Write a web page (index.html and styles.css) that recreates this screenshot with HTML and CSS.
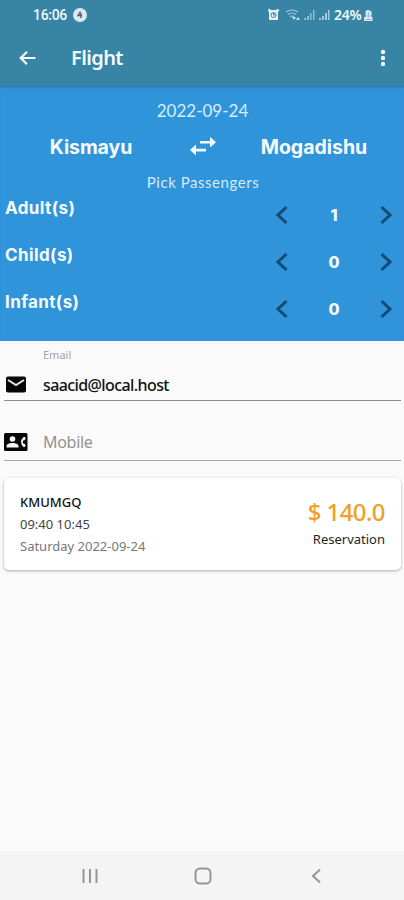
FILE: index.html
```html
<!DOCTYPE html>
<html lang="en">
<head>
<meta charset="utf-8">
<meta name="viewport" content="width=device-width, initial-scale=1">
<title>Flight</title>
<link rel="stylesheet" href="styles.css">
</head>
<body>
<div class="screen">
  <header class="top">
    <div class="status">
      <span class="clock">16:06</span>
      <svg class="notice" width="14" height="14" viewBox="0 0 14 14"><circle cx="7" cy="7" r="7" fill="#d9eaf3"/><path d="M7.500 3.500 5 7.500h4M8 5v5" fill="none" stroke="#5b5a6c" stroke-width="1.400"/></svg>
      <svg class="indicators" width="62" height="14" viewBox="0 0 62 14">
        <path d="M1 2h9v10H1z" fill="#e6f3f8"/><path d="M0 3l2-2M11 3 9 1" stroke="#e6f3f8" stroke-width="1.5"/><circle cx="5.500" cy="7" r="2.500" fill="none" stroke="#3784a3"/><path d="M5.500 5v2h2" fill="none" stroke="#3784a3"/>
        <g fill="none" stroke="#a3cbdc" stroke-width="1.100"><path d="M18 4q6-4 12 0M20 6.500q4-3 8 0M22 9q2-2 4 0"/></g>
        <path d="M24 9l2 3 2-3zM28 12l2-3 2 3z" fill="#cce3ec"/>
        <path d="M36 12h2v-2h-2zM39 12h2V8h-2zM42 12h1.500V5H42zM45 12h1.500V2H45z" fill="#8fbfd2"/>
        <path d="M51 12h2v-2h-2zM54 12h2V8h-2zM57 12h2V5h-2zM60 12h1.500V2H60z" fill="#9fcada"/>
      </svg>
      <span class="percent">24%</span>
      <svg class="battery" width="9" height="13" viewBox="0 0 9 13"><path d="M2.500 1h3v1h2v6h1v4H0V8h1.500V2h1z" fill="#d5e8f0"/><path d="M4.500 3v5M2.500 6l2 2 2-2M1.500 10.500h5.500" fill="none" stroke="#8dbacd"/></svg>
    </div>
    <div class="appbar">
      <svg class="back" width="18" height="16" viewBox="0 0 18 16"><path d="M16.500 8H2M8 1.700 1.700 8l6.300 6.300" fill="none" stroke="#f2fafd" stroke-width="2.200"/></svg>
      <h1 class="title">Flight</h1>
      <svg class="more" width="6" height="18" viewBox="0 0 6 18" fill="#f2fafd"><circle cx="3" cy="3" r="2.200"/><circle cx="3" cy="9" r="2.200"/><circle cx="3" cy="15" r="2.200"/></svg>
    </div>
  </header>

  <section class="trip">
    <div class="date"><span>2022-09-24</span></div>
    <div class="route">
      <span class="city from">Kismayu</span>
      <svg class="swap" width="26" height="20" viewBox="0 0 26 20"><path d="M10 5h10V.800L26 6.200l-6 5.400V7.600H10zM16 15.400H6v4L0 14l6-5.400v4.200h10z" fill="#f4fbff"/></svg>
      <span class="city to">Mogadishu</span>
    </div>
    <div class="pick"><span>Pick Passengers</span></div>
    <div class="row"><span class="kind adult">Adult(s)</span><div class="stepper"><svg class="chev" viewBox="0 0 12 20"><path d="M10.500 2 2 10l8.500 8"/></svg><span class="count">1</span><svg class="chev" viewBox="0 0 12 20"><path d="M1.500 2 10 10l-8.500 8"/></svg></div></div>
    <div class="row"><span class="kind child">Child(s)</span><div class="stepper"><svg class="chev" viewBox="0 0 12 20"><path d="M10.500 2 2 10l8.500 8"/></svg><span class="count">0</span><svg class="chev" viewBox="0 0 12 20"><path d="M1.500 2 10 10l-8.500 8"/></svg></div></div>
    <div class="row"><span class="kind infant">Infant(s)</span><div class="stepper"><svg class="chev" viewBox="0 0 12 20"><path d="M10.500 2 2 10l8.500 8"/></svg><span class="count">0</span><svg class="chev" viewBox="0 0 12 20"><path d="M1.500 2 10 10l-8.500 8"/></svg></div></div>
  </section>

  <main class="content">
    <div class="label">Email</div>
    <div class="field email">
      <svg width="24" height="18" viewBox="0 0 24 18"><rect x="2" y="0.500" width="20" height="16" rx="2" fill="#050505"/><path d="M4 4l8 5 8-5" fill="none" stroke="#e8e8e8" stroke-width="2"/></svg>
      <span class="value">saacid@local.host</span>
    </div>
    <div class="field mobile">
      <svg width="24" height="18" viewBox="0 0 24 18"><rect x="0" y="0" width="23.500" height="18" rx="1.500" fill="#050505"/><circle cx="8.500" cy="6" r="2.800" fill="#f5f5f5"/><path d="M2.500 14.500v-1.500c0-4 12-4 12 0v1.500z" fill="#f5f5f5"/><path d="M21 4h-1.500q-5 5 0 10H21l.7-1.800-1.500-1.800h-1.100q-.5-1.400 0-2.800h1.100L21.700 5.800z" fill="#f5f5f5"/></svg>
      <span class="placeholder">Mobile</span>
    </div>
    <article class="card">
      <div class="flight">
        <div class="code"><span>KMUMGQ</span></div>
        <div class="times"><span>09:40 10:45</span></div>
        <div class="day"><span>Saturday 2022-09-24</span></div>
      </div>
      <div class="fare">
        <div class="price"><span>$ 140.0</span></div>
        <div class="reserve"><span>Reservation</span></div>
      </div>
    </article>
  </main>

  <nav class="nav">
    <svg width="16" height="16" viewBox="0 0 16 16" fill="none" stroke="#959595" stroke-width="2"><path d="M1.500 1v14M8 1v14M14.500 1v14"/></svg>
    <svg class="home" width="18" height="18" viewBox="0 0 18 18" fill="none" stroke="#959595" stroke-width="2"><rect x="1.500" y="1.500" width="15" height="15" rx="4.500"/></svg>
    <svg width="10" height="16" viewBox="0 0 10 16" fill="none" stroke="#959595" stroke-width="2"><path d="M9 1.500 2 8l7 6.500"/></svg>
  </nav>
</div>
</body>
</html>
```
FILE: styles.css
```css
* { box-sizing: border-box; }
body { margin: 0; background: #fafafa; font-family: "Noto Sans", sans-serif; }
svg { display: block; flex: none; }
.screen { width: 404px; height: 900px; display: flex; flex-direction: column; overflow: hidden; }

.top { height: 86px; flex: none; background: #3784a5; color: #f2fafd; }
.status { height: 30px; display: flex; align-items: center; padding-left: 33px; font-size: 13px; line-height: 30px; }
.clock { width: 40px; font-family: Roboto, sans-serif; font-size: 14px; font-weight: 500; letter-spacing: -0.3px; }
.indicators { margin-left: 181px; }
.percent { width: 30px; margin-left: 4px; font-family: "Noto Sans", sans-serif; font-size: 14px; font-weight: 600; letter-spacing: -0.2px; }
.appbar { height: 56px; display: flex; align-items: center; padding: 0 18px 0 19px; }
.title { margin: 0 auto 0 34px; font-size: 20px; font-weight: 600; line-height: 56px; letter-spacing: -0.6px; }

.trip { height: 255px; flex: none; background: #3094db; color: #f6fcff; box-shadow: inset 0 3px 3px -2px #2a77a8; font-family: Lato, sans-serif; }
.date { height: 36px; padding: 13px 0 0 1px; text-align: center; font-size: 17px; line-height: 24px; color: #d9eefa; }
.route { height: 48px; display: grid; grid-template-columns: 182px 40px 182px; align-items: center; text-align: center; }
.city { padding-top: 2px; font-family: Inter, sans-serif; font-size: 19.5px; font-weight: 700; }
.from { letter-spacing: -0.1px; }
.to { padding-left: 2px; }
.swap { margin-left: 8px; }
.pick { height: 24px; padding-left: 2px; text-align: center; font-size: 15px; line-height: 24px; letter-spacing: 0.55px; color: #d3ebf9; }
.row { height: 47px; display: flex; justify-content: space-between; }
.kind { padding-left: 5px; font-family: Inter, sans-serif; font-size: 17px; font-weight: 700; line-height: 29px; letter-spacing: 0.4px; }
.stepper { width: 116px; height: 42px; margin-right: 12px; display: flex; align-items: center; justify-content: space-between; }
.chev { width: 12px; height: 20px; fill: none; stroke: #144b73; stroke-width: 3; }
.count { font-family: Inter, sans-serif; font-size: 16px; font-weight: 800; }

.content { flex: 1; }
.label { height: 28px; padding-left: 43px; color: #a4a4a4; font-size: 11px; line-height: 28px; }
.field { display: flex; align-items: center; gap: 15px; margin: 0 3px 0 4px; border-bottom: 1.5px solid #8c8c8c; }
.email { height: 32px; }
.mobile { height: 60px; padding-top: 23px; border-color: #a8a8a8; }
.value { color: #111; font-size: 16px; font-weight: 500; letter-spacing: -0.6px; }
.placeholder { color: #939393; font-size: 16px; letter-spacing: -0.3px; }
.card { height: 92px; margin: 17px 3px 0 4px; padding: 13px 16px 0; border-radius: 5px; background: #fff; box-shadow: 0 1px 3px rgba(0,0,0,.32); display: flex; justify-content: space-between; }
.flight { line-height: 22px; font-size: 13px; }
.code { color: #111; font-weight: 500; }
.times { color: #444; }
.day { color: #777; }
.fare { text-align: right; }
.price { height: 36px; color: #eea027; font-size: 24px; line-height: 41px; font-weight: 500; letter-spacing: -0.6px; }
.reserve { color: #252525; font-size: 13px; line-height: 24px; }
.nav { height: 49px; flex: none; background: #f4f4f4; display: flex; align-items: center; justify-content: space-between; padding: 0 83px 0 82px; }
.home { margin-right: 4px; }
```
